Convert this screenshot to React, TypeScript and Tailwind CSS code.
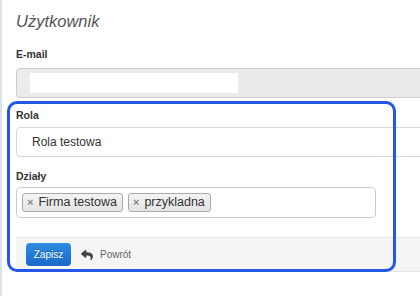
import { FaReply } from 'react-icons/fa';

const font = { fontFamily: '"Liberation Sans", Arial, sans-serif' };

function Label({ children, className = '' }: { children: React.ReactNode; className?: string }) {
  return (
    <div className={`h-[12px] text-[10.5px] leading-[12px] font-bold text-[#333] ${className}`}>
      {children}
    </div>
  );
}

function Tag({ label }: { label: string }) {
  return (
    <div className="flex h-[19px] items-center gap-[5px] rounded-[3px] border border-[#aaa] bg-gradient-to-b from-[#f4f4f4] to-[#e4e4e4] pl-[4px] pr-[5px] text-[12.5px] leading-none text-[#333]">
      <span className="text-[11px] font-bold text-[#888]">×</span>
      <span>{label}</span>
    </div>
  );
}

export default function App() {
  return (
    <div
      className="relative h-[296px] w-[420px] overflow-hidden border-l-2 border-[#dbe3ec] bg-white"
      style={font}
    >
      <div className="w-[440px] pl-[14px]">
        <h2 className="mt-[12px] h-[18px] text-[16.5px] leading-[18px] font-normal italic text-[#555]">
          Użytkownik
        </h2>

        <Label className="mt-[18px]">E-mail</Label>
        <div className="mt-[8px] flex h-[30px] items-center rounded-[4px] border border-[#ccc] bg-[#ebebeb] pl-[13px]">
          <div className="h-[20px] w-[208px] bg-white" />
        </div>

        <Label className="mt-[11px]">Rola</Label>
        <div className="mt-[6px] flex h-[30px] items-center rounded-[4px] border border-[#d6d6d6] bg-white pl-[15px] text-[12px] text-[#333]">
          Rola testowa
        </div>

        <Label className="mt-[13px]">Działy</Label>
        <div className="mt-[5px] flex h-[31px] w-[360px] items-center gap-[5px] rounded-[4px] border border-[#ccc] bg-white pl-[5px]">
          <Tag label="Firma testowa" />
          <Tag label="przykladna" />
        </div>

        <div className="mt-[19px] flex h-[35px] items-center gap-[9px] border-t border-b border-[#e5e5e5] bg-[#f5f5f5] pl-[10px]">
          <button className="h-[23px] w-[45px] rounded-[4px] bg-gradient-to-b from-[#2f8de2] to-[#1a68c8] text-[10px] text-white [text-shadow:0_-1px_0_rgba(0,0,0,0.25)]">
            Zapisz
          </button>
          <div className="flex items-center gap-[6px] text-[10px] text-[#666]">
            <FaReply className="h-[12px] w-[14px] text-[#444]" />
            <span>Powrót</span>
          </div>
        </div>
      </div>

      <div className="pointer-events-none absolute left-[5px] top-[101px] h-[171px] w-[389px] rounded-[10px] border-[3px] border-[#2457e6]" />
    </div>
  );
}
